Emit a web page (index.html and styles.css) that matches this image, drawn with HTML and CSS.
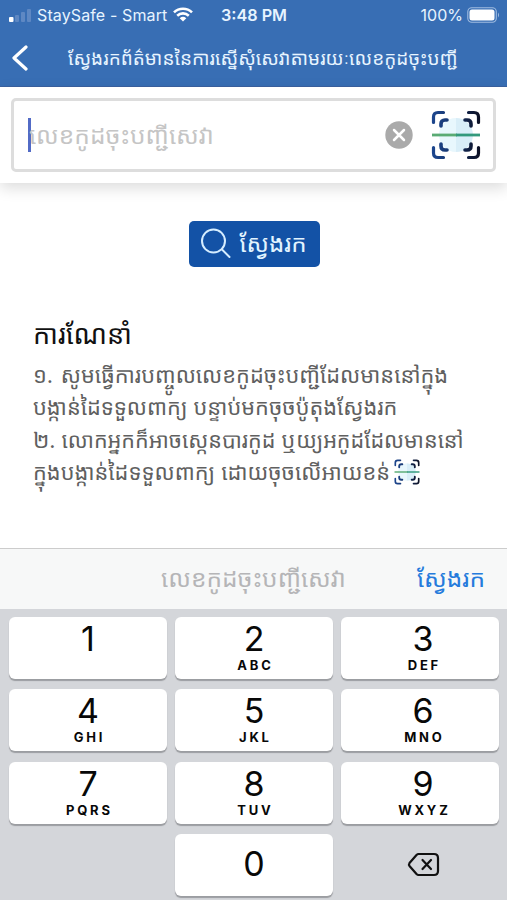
FILE: index.html
```html
<!DOCTYPE html>
<html lang="km">
<head>
<meta charset="utf-8">
<title>ស្វែងរក</title>
<link rel="stylesheet" href="styles.css">
</head>
<body>
<svg width="0" height="0" class="defs" aria-hidden="true">
  <defs>
    <linearGradient id="ink" gradientUnits="userSpaceOnUse" x1="0" y1="0" x2="50" y2="0"><stop offset="0" stop-color="#1d4790"/><stop offset=".45" stop-color="#17356b"/><stop offset="1" stop-color="#0b0e20"/></linearGradient>
  </defs>
  <symbol id="scan" viewBox="0 0 50 50">
    <path d="M25 8a17 17 0 0 0 0 34z" fill="#e8f7fd"/>
    <path d="M25 8a17 17 0 0 1 0 34z" fill="#d9eef8"/>
    <g fill="none" stroke="url(#ink)" stroke-width="3.2" stroke-linecap="round">
      <path d="M2.500 12.500V7q0-4.500 4.500-4.500h5.500M37.500 2.500h5.500q4.500 0 4.500 4.500v5.500M2.500 37.500v5.500q0 4.500 4.500 4.500h5.500M37.500 47.500h5.500q4.500 0 4.500-4.500v-5.500"/>
      <path stroke-width="3.600" d="M10 16v-2q0-4 4-4h2M34 10h2q4 0 4 4v2M10 34v2q0 4 4 4h2M34 40h2q4 0 4-4v-2"/>
    </g>
    <path d="M1 25h25" stroke="#5aab74" stroke-width="2.800"/>
    <path d="M25 25h24" stroke="#32997c" stroke-width="2.800"/>
  </symbol>
</svg>
<header class="top">
  <div class="status">
    <div class="carrier">
      <svg width="24" height="16" viewBox="0 0 24 16"><rect x="1" y="10" width="4.500" height="5" rx="1" fill="#fff"/><g fill="#5e88c3"><rect x="7" y="8" width="4" height="7" rx="1"/><rect x="13" y="5" width="4" height="10" rx="1"/><rect x="19" y="2" width="4" height="13" rx="1"/></g></svg>
      <span>StaySafe - Smart</span>
      <svg class="wifi" width="20" height="15" viewBox="0 0 20 15" fill="none" stroke="#fff" stroke-width="2.600"><path d="M1 5.400a13 13 0 0 1 18 0M4.200 8.700a8.500 8.500 0 0 1 11.600 0"/><path d="M6.700 11.300a5 5 0 0 1 6.600 0L10 14.500z" fill="#fff" stroke="none"/></svg>
    </div>
    <div class="time">3:48 PM</div>
    <div class="battery"><span>100%</span>
      <svg width="33" height="16" viewBox="0 0 33 16"><rect x=".8" y=".8" width="28.500" height="14.400" rx="4" fill="none" stroke="#a0bce0" stroke-width="1.100"/><rect x="2.500" y="2.500" width="25" height="11" rx="2.500" fill="#fff"/><path d="M31 5.500q2 2.500 0 5z" fill="#a0bce0"/></svg>
    </div>
  </div>
  <div class="nav">
    <svg class="back" width="16" height="26" viewBox="0 0 16 26" fill="none" stroke="#fff" stroke-width="3.200" stroke-linecap="round" stroke-linejoin="round"><path d="M14 2L2 13l12 11"/></svg>
    <h1>ស្វែងរកព័ត៌មាននៃការស្នើសុំសេវាតាមរយៈលេខកូដចុះបញ្ជី</h1>
  </div>
</header>
<section class="search">
  <div class="field">
    <span class="caret"></span>
    <span class="placeholder">លេខកូដចុះបញ្ជីសេវា</span>
    <svg class="clear" width="28" height="28" viewBox="0 0 28 28"><circle cx="14" cy="14" r="13.700" fill="#aaa"/><path d="M9 9l10 10M19 9L9 19" stroke="#fff" stroke-width="2.500" stroke-linecap="round"/></svg>
    <svg width="50" height="50"><use href="#scan"/></svg>
  </div>
</section>
<main>
  <button class="find">
    <svg width="32" height="32" viewBox="0 0 32 32" fill="none" stroke="#d5edff" stroke-width="2" stroke-linecap="round"><circle cx="12.500" cy="13" r="11.500"/><path d="M21 21.500l7.500 7.500"/></svg>
    <span>ស្វែងរក</span>
  </button>
  <h2>ការណែនាំ</h2>
  <div class="guide">
    <p class="l1">១. សូមធ្វើការបញ្ចូលលេខកូដចុះបញ្ជីដែលមាននៅក្នុង</p>
    <p class="l2">បង្កាន់ដៃទទួលពាក្យ បន្ទាប់មកចុចប៉ូតុងស្វែងរក</p>
    <p class="l3">២. លោកអ្នកក៏អាចស្កេនបារកូដ ឬយ្យអកូដដែលមាននៅ</p>
    <p class="l4"><span>ក្នុងបង្កាន់ដៃទទួលពាក្យ ដោយចុចលើអាយខន់</span><svg width="26" height="26"><use href="#scan"/></svg></p>
  </div>
</main>
<section class="keyboard">
  <div class="accessory"><span class="hint">លេខកូដចុះបញ្ជីសេវា</span><span class="action">ស្វែងរក</span></div>
  <div class="keys">
    <div class="key"><b>1</b></div><div class="key"><b>2</b><i>ABC</i></div><div class="key right"><b>3</b><i>DEF</i></div>
    <div class="key"><b>4</b><i>GHI</i></div><div class="key"><b>5</b><i>JKL</i></div><div class="key right"><b>6</b><i>MNO</i></div>
    <div class="key"><b>7</b><i>PQRS</i></div><div class="key"><b>8</b><i>TUV</i></div><div class="key right"><b>9</b><i>WXYZ</i></div>
    <div></div><div class="key zero"><b>0</b></div>
    <div class="delete"><svg width="33" height="25" viewBox="0 0 33 25" fill="none" stroke="#111" stroke-width="2.200" stroke-linecap="round" stroke-linejoin="round"><path d="M11.500 2H27q4 0 4 4v13q0 4-4 4H11.500q-1 0-2-1L2.500 14q-1-1.500 0-3L9.500 3q1-1 2-1z"/><path d="M15.500 8l8.500 9M24 8l-8.500 9"/></svg></div>
  </div>
</section>
</body>
</html>
```
FILE: styles.css
```css
* { box-sizing: border-box; }
body { margin: 0; width: 507px; height: 900px; overflow: hidden; display: flex; flex-direction: column; background: #fff; font-family: Inter, "Noto Sans Khmer", "Khmer OS", "Noto Sans", sans-serif; }
.defs { position: absolute; }
h1, h2, p { margin: 0; font-weight: 400; white-space: nowrap; }
svg { display: block; flex: none; }
.top { height: 87px; flex: none; background: #386eb4; border-bottom: 1px solid #3b62a0; color: #e7f4ff; }
.status { height: 29px; display: grid; grid-template-columns: 1fr auto 1fr; align-items: center; padding: 0 7px 0 8px; font-size: 16px; }
.carrier { display: flex; align-items: center; gap: 5px; letter-spacing: .12px; white-space: nowrap; }
.wifi { margin-left: 1px; }
.time { font-weight: 600; font-size: 16.200px; }
.battery { display: flex; justify-content: flex-end; align-items: center; gap: 4px; }
.nav { height: 57px; display: flex; align-items: center; padding-left: 12px; }
.nav h1 { margin-left: 40px; font-size: 19px; }
.search { height: 96px; flex: none; padding: 11px 11px 0; box-shadow: 0 5px 14px rgba(0,0,0,.14); }
.field { height: 74px; border: 3px solid #ddd; border-radius: 5px; display: flex; align-items: center; padding: 0 12px 0 14px; }
.caret { width: 3px; height: 34px; background: #526bc6; }
.placeholder { margin-left: -2px; padding-bottom: 2px; font-size: 24.500px; color: #c5c5c5; }
.clear { margin-left: auto; margin-right: 18px; }
main { flex: 1; display: flex; flex-direction: column; }
.find { align-self: center; margin: 38px 0 0 1px; width: 131px; height: 46px; border: 0; border-radius: 5px; background: #1352a6; color: #e2f4ff; font: inherit; font-size: 24.200px; display: flex; align-items: center; padding: 0 0 0 12px; gap: 7px; }
.find span { white-space: nowrap; padding-bottom: 3px; }
h2 { margin: 45px 0 0 33px; height: 47px; line-height: 46px; font-size: 27px; color: #111; }
.guide { margin-left: 33px; color: #606060; font-size: 21.750px; }
.guide p { height: 32.300px; line-height: 32.300px; }
.guide .l1 { word-spacing: 1.500px; }
.guide .l3 { font-size: 21.550px; }
.guide .l4 { display: flex; align-items: center; gap: 4px; }
.keyboard { height: 352px; flex: none; background: #d4d6da; }
.accessory { height: 61px; background: #f7f8f8; border-top: 1px solid #ccc; display: grid; grid-template-columns: 1fr auto 1fr; align-items: center; font-size: 24.500px; padding-bottom: 3px; }
.hint { grid-column: 2; color: #b5b5b7; }
.action { justify-self: end; margin-right: 22px; color: #257bdc; }
.keys { padding: 8px 8px 0 9px; display: grid; grid-template-columns: repeat(3, 1fr); grid-auto-rows: 62px; gap: 10.400px 8px; }
.key { background: #fff; border-radius: 6px; box-shadow: 0 2px 1px #9b9da1; display: flex; flex-direction: column; align-items: center; color: #080808; }
.key b { font-weight: 400; font-size: 34px; line-height: 34px; margin-top: 5px; }
.key i { font-style: normal; font-weight: 700; font-size: 13px; line-height: 16px; letter-spacing: 2.800px; margin: 1px -2.800px 0 0; }
.right { padding-left: 6px; }
.zero b { margin-top: 13px; }
.delete { display: grid; place-items: center; padding: 0 0 2px 6px; }
```
